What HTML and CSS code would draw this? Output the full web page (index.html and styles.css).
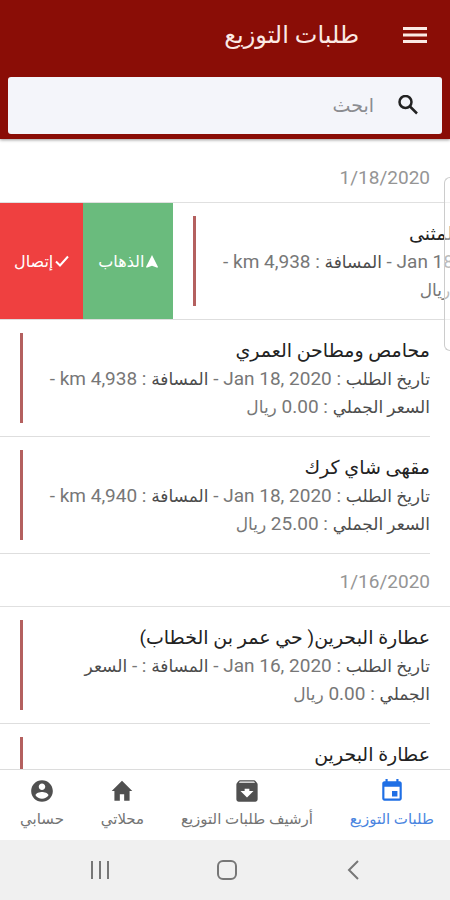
FILE: index.html
```html
<!DOCTYPE html>
<html lang="ar" dir="rtl">

<head>
  <meta charset="UTF-8">
  <meta name="viewport" content="width=device-width, initial-scale=1.0">
  <title>طلبات التوزيع</title>

  <link rel="stylesheet" href="styles.css">
</head>

<body>
  <header class="header">
    <div class="toolbar">
      <button class="menu-btn" type="button" aria-label="القائمة">
        <svg viewBox="0 0 24 16" width="24" height="16"><path d="M0 0h24v3H0zM0 6.500h24v3H0zM0 13h24v3H0z" /></svg>
      </button>
      <h1 class="title">طلبات التوزيع</h1>
    </div>
    <label class="search">
      <svg viewBox="0 0 20 22" width="20" height="22"><circle cx="7.500" cy="7" r="6" /><path d="M12 11.500l7 7" /></svg>
      <input type="search" placeholder="ابحث" aria-label="ابحث">
    </label>
  </header>

  <main class="content">
    <section class="group">
      <h2 class="date">1/18/2020</h2>
      <ul>
        <li class="sliding">
          <div class="item">
            <div class="label">
              <h3>شركة مطاحن حي المثنى</h3>
              <p><b>تاريخ الطلب</b> : Jan 18, 2020 - <b>المسافة</b> : 4,938 km - <b>السعر الجملي</b> : 0.00 <span class="currency">ريال</span></p>
            </div>
            <span class="bar"></span>
          </div>
          <button class="option go" type="button">
            <svg viewBox="0 0 12 14" width="12" height="14"><path d="M6 1l6 12-.7.7L6 11.700.7 13.700 0 13z" /></svg>
            <span>الذهاب</span>
          </button>
          <button class="option call" type="button">
            <svg class="check" viewBox="0 0 14 12" width="14" height="12"><path d="M1 6.500l4 4L13 1.500" /></svg>
            <span>إتصال</span>
          </button>
        </li>
        <li class="item">
          <div class="label">
            <h3>محامص ومطاحن العمري</h3>
            <p><b>تاريخ الطلب</b> : Jan 18, 2020 - <b>المسافة</b> : 4,938 km - <b>السعر الجملي</b> : 0.00 <span class="currency">ريال</span></p>
          </div>
          <span class="bar"></span>
        </li>
        <li class="item">
          <div class="label">
            <h3>مقهى شاي كرك</h3>
            <p><b>تاريخ الطلب</b> : Jan 18, 2020 - <b>المسافة</b> : 4,940 km - <b>السعر الجملي</b> : 25.00 <span class="currency">ريال</span></p>
          </div>
          <span class="bar"></span>
        </li>
      </ul>
    </section>

    <section class="group">
      <h2 class="date">1/16/2020</h2>
      <ul>
        <li class="item">
          <div class="label">
            <h3>عطارة البحرين( حي عمر بن الخطاب)</h3>
            <p><b>تاريخ الطلب</b> : Jan 16, 2020 - <b>المسافة</b> : - <b>السعر الجملي</b> : 0.00 <span class="currency">ريال</span></p>
          </div>
          <span class="bar"></span>
        </li>
        <li class="item">
          <div class="label">
            <h3>عطارة البحرين</h3>
            <p><b>تاريخ الطلب</b> : Jan 16, 2020</p>
          </div>
          <span class="bar"></span>
        </li>
      </ul>
    </section>
  </main>

  <nav class="tabs">
    <a class="tab active" href="#orders">
      <svg viewBox="0 0 24 24" width="26" height="26"><path d="M17 12h-5v5h5v-5zM16 1v2H8V1H6v2H5c-1.110 0-1.990.9-1.990 2L3 19c0 1.100.890 2 2 2h14c1.100 0 2-.9 2-2V5c0-1.100-.9-2-2-2h-1V1h-2zm3 18H5V8h14v11z" /></svg>
      <span>طلبات التوزيع</span>
    </a>
    <a class="tab" href="#archive">
      <svg viewBox="1 1 22 22" width="26" height="26"><path d="M20.540 5.230l-1.390-1.680C18.880 3.210 18.470 3 18 3H6c-.470 0-.880.210-1.160.550L3.460 5.230C3.170 5.570 3 6.020 3 6.500V19c0 1.100.9 2 2 2h14c1.100 0 2-.9 2-2V6.500c0-.480-.170-.930-.460-1.270zM12 17.500L6.500 12H10v-2h4v2h3.500L12 17.500zM5.120 5l.810-1h12l.940 1H5.120z" /></svg>
      <span>أرشيف طلبات التوزيع</span>
    </a>
    <a class="tab" href="#shops">
      <svg viewBox="0 0 24 24" width="26" height="26"><path d="M10 21v-6h4v6h5v-9h2.500L12 2.500 2.500 12H5v9z" /></svg>
      <span>محلاتي</span>
    </a>
    <a class="tab" href="#account">
      <svg viewBox="0 0 24 24" width="26" height="26"><path d="M12 2C6.480 2 2 6.480 2 12s4.480 10 10 10 10-4.480 10-10S17.520 2 12 2zm0 3c1.660 0 3 1.340 3 3s-1.340 3-3 3-3-1.340-3-3 1.340-3 3-3zm0 14.200c-2.500 0-4.710-1.280-6-3.220.030-1.990 4-3.080 6-3.080 1.990 0 5.970 1.090 6 3.080-1.290 1.940-3.500 3.220-6 3.220z" /></svg>
      <span>حسابي</span>
    </a>
  </nav>

  <footer class="system-nav">
    <button type="button" aria-label="رجوع">
      <svg viewBox="0 0 22 22" width="22" height="22"><path d="M15 2L6 11l9 9" /></svg>
    </button>
    <button type="button" aria-label="الرئيسية">
      <svg viewBox="0 0 22 22" width="22" height="22"><rect x="2" y="2" width="18" height="18" rx="5" /></svg>
    </button>
    <button type="button" aria-label="التطبيقات">
      <svg viewBox="0 0 22 22" width="22" height="22"><path d="M3 2v18M11 2v18M19 2v18" /></svg>
    </button>
  </footer>

  <div class="edge-handle"></div>
</body>

</html>
```
FILE: styles.css
```css
* {
  margin: 0;
  padding: 0;
  box-sizing: border-box;
}

body {
  display: flex;
  flex-direction: column;
  position: relative;
  height: 100vh;
  overflow: hidden;
  background: #fff;
  color: #222;
  font-family: Roboto, "DejaVu Sans", sans-serif;
  font-size: 16px;
}

button {
  border: none;
  background: none;
  font: inherit;
  color: inherit;
}

ul {
  list-style: none;
}

/* header */
.header {
  position: relative;
  flex: none;
  padding: 0 8px 5px;
  background: #8a0d06;
  box-shadow: 0 1px 3px rgba(0, 0, 0, 0.4);
}

.toolbar {
  display: flex;
  align-items: center;
  gap: 44px;
  height: 77px;
  padding: 0 15px 8px;
}

.menu-btn {
  display: flex;
  fill: #fbe9e4;
}

.title {
  color: #fbe9e4;
  font-size: 24px;
  font-weight: 400;
}

.search {
  display: flex;
  align-items: center;
  gap: 24px;
  height: 57px;
  padding: 0 24px;
  background: #f4f5fa;
  border-radius: 3px;
}

.search svg {
  flex: none;
  fill: none;
  stroke: #222;
  stroke-width: 2.5;
}

.search input {
  flex: 1;
  min-width: 0;
  border: none;
  outline: none;
  background: none;
  font: inherit;
  font-size: 19px;
}

.search input::placeholder {
  color: #8b8c90;
}

/* list */
.content {
  flex: 1;
  min-height: 0;
  padding-top: 11px;
  overflow: hidden;
}

.date {
  height: 53px;
  padding: 0 20px;
  border-bottom: 1px solid #e0e0e0;
  color: #959595;
  font-size: 19px;
  font-weight: 400;
  line-height: 56px;
}

.sliding {
  display: flex;
  justify-content: flex-end;
  overflow: hidden;
  border-bottom: 1px solid #dedede;
}

.item {
  display: flex;
  gap: 20px;
  padding: 13px 20px;
}

.sliding .item {
  flex: 0 0 100%;
}

/* divider is inset on the start side only */
li.item {
  margin-inline-start: 20px;
  padding-inline-start: 0;
  border-bottom: 1px solid #dedede;
}

.label {
  flex: 1;
  min-width: 0;
  padding: 4px 0 2px;
  line-height: 28px;
}

.label h3 {
  font-size: 19px;
  font-weight: 400;
}

.label p {
  color: #777;
  font-size: 19px;
}

.label b {
  color: #4c4c4c;
  font-size: 17px;
  font-weight: 400;
}

.currency {
  font-size: 17px;
}

.bar {
  flex: none;
  width: 3px;
  background: #b4605f;
}

.option {
  display: flex;
  flex: none;
  align-items: center;
  gap: 2px;
  color: #fff;
}

.option svg {
  fill: #fff;
}

.option .check {
  fill: none;
  stroke: #fff;
  stroke-width: 2;
}

.go {
  padding: 0 15px;
  background: #6abb7d;
}

.call {
  padding: 0 14px;
  background: #ef4040;
}

/* bottom tabs */
.tabs {
  display: flex;
  flex: none;
  justify-content: space-between;
  height: 71px;
  padding: 0 16px 0 20px;
  border-top: 1px solid #dcdcdc;
  background: #fff;
}

.tab {
  display: flex;
  flex-direction: column;
  align-items: center;
  gap: 4px;
  padding-top: 8px;
  color: #747474;
  font-size: 15px;
  line-height: 22px;
  text-decoration: none;
}

.tab svg {
  fill: #505050;
}

.tab.active {
  color: #4a85e0;
}

.tab.active svg {
  fill: #1f6fe5;
}

.system-nav {
  display: flex;
  flex: none;
  align-items: center;
  justify-content: space-around;
  height: 60px;
  padding: 0 32px 0 36px;
  background: #f0f0f0;
}

.system-nav button {
  display: flex;
}

.system-nav svg {
  fill: none;
  stroke: #777;
  stroke-width: 2;
}

/* edge panel handle, lies over the list */
.edge-handle {
  position: absolute;
  top: 177px;
  right: 0;
  width: 6px;
  height: 174px;
  border: 1px solid #ccc;
  border-right: none;
  border-radius: 6px 0 0 6px;
  background: rgba(255, 255, 255, 0.5);
}
```
